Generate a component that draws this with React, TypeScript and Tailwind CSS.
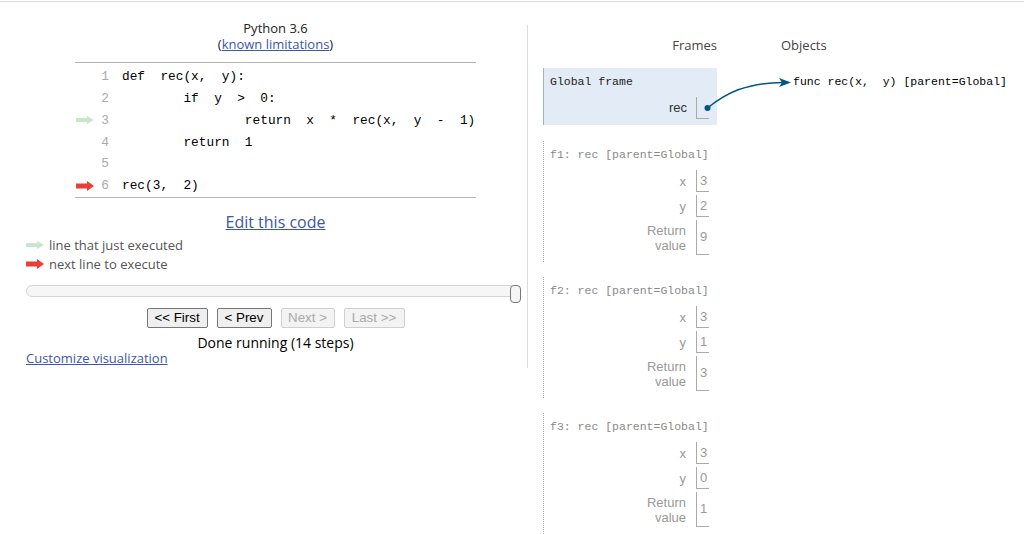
import React from "react";

const mono = "font-['Liberation_Mono',monospace]";
const sans = "font-['Open_Sans','Noto_Sans',sans-serif]";
const arial = "font-['Liberation_Sans',Arial,sans-serif]";

function Arrow({ color, big }: { color: string; big?: boolean }) {
  if (big) {
    return (
      <svg width="18" height="10" viewBox="0 0 18 10" className="block">
        <path d="M0 2.5H11V0L18 5L11 10V7.5H0Z" fill={color} />
      </svg>
    );
  }
  return (
    <svg width="18" height="8" viewBox="0 0 18 8" className="block">
      <path d="M0 2H11V0L18 4L11 8V6H0Z" fill={color} />
    </svg>
  );
}

const code = [
  "def  rec(x,  y):",
  "        if  y  >  0:",
  "                return  x  *  rec(x,  y  -  1)",
  "        return  1",
  "",
  "rec(3,  2)",
];

type Var = { name: string; value: string; ret?: boolean };

const frames: { title: string; vars: Var[] }[] = [
  {
    title: "f1: rec [parent=Global]",
    vars: [
      { name: "x", value: "3" },
      { name: "y", value: "2" },
      { name: "Return value", value: "9", ret: true },
    ],
  },
  {
    title: "f2: rec [parent=Global]",
    vars: [
      { name: "x", value: "3" },
      { name: "y", value: "1" },
      { name: "Return value", value: "3", ret: true },
    ],
  },
  {
    title: "f3: rec [parent=Global]",
    vars: [
      { name: "x", value: "3" },
      { name: "y", value: "0" },
      { name: "Return value", value: "1", ret: true },
    ],
  },
];

function VarRow({ v }: { v: Var }) {
  return (
    <div className={`flex items-center ${arial}`}>
      <div className="pr-[10px] text-right text-[13px] leading-[15px] text-[#999]">
        {v.ret ? (
          <>
            <div className="h-[15px]">Return</div>
            <div className="h-[15px]">value</div>
          </>
        ) : (
          v.name
        )}
      </div>
      <div
        className={`flex w-[13px] items-center border-b border-l border-[#aaa] pl-[3px] text-[13px] text-[#999] ${
          v.ret ? "h-[35px]" : "h-[22px]"
        }`}
      >
        {v.value}
      </div>
    </div>
  );
}

export default function App() {
  return (
    <div className={`relative h-[534px] w-[1024px] overflow-hidden bg-white ${sans}`}>
      <div className="mt-px border-t border-[#dcdcdc]" />

      <div className="flex pt-[23px]">
        {/* left: code + controls */}
        <div className="h-[343px] w-[528px] shrink-0 border-r border-[#dcdcdc] pl-[26px] pr-[2px]">
          <div className="-mt-[5px] text-center text-[13px] leading-[16px] text-[#222]">
            Python 3.6
          </div>
          <div className="text-center text-[13px] leading-[16px] text-[#222]">
            (<a href="#" className="text-[#3d58a2] underline">known limitations</a>)
          </div>

          <div className={`mx-auto mt-[10px] w-[401px] border-y border-[#b3b3b3] pt-[3px] ${mono} text-[12.8px]`}>
            {code.map((line, i) => (
              <div key={i} className="flex h-[21.8px] items-center">
                <div className="w-[22px] pl-px">
                  {i === 2 && <Arrow color="#c9e6ca" />}
                  {i === 5 && <Arrow color="#e93f34" big />}
                </div>
                <div className="w-[12px] text-right text-[#aaa]">{i + 1}</div>
                <div className="whitespace-pre pl-[13px] text-black">{line}</div>
              </div>
            ))}
          </div>

          <div className="mt-[14px] text-center text-[16px] leading-[20px]">
            <a href="#" className="text-[#3d58a2] underline">Edit this code</a>
          </div>

          <div className="mt-[4px] flex h-[19px] items-center gap-[5px] text-[13px] text-[#555]">
            <Arrow color="#c9e6ca" />
            <span>line that just executed</span>
          </div>
          <div className="flex h-[19px] items-center gap-[5px] text-[13px] text-[#555]">
            <Arrow color="#e93f34" big />
            <span>next line to execute</span>
          </div>

          <div className="relative mt-[11px] h-[18px] w-[495px]">
            <div className="mt-[2px] h-[12px] w-[490px] rounded-[6px] border border-[#d3d3d3] bg-[#f6f6f6]" />
            <div className="absolute right-0 top-0 h-[18px] w-[11px] rounded-[4px] border border-[#777] bg-[#f6f6f6]" />
          </div>

          <div className={`mt-[5px] flex justify-center gap-[9px] ${arial} text-[13.33px]`}>
            <button className="h-[20px] w-[61px] rounded-[2px] border border-[#767676] bg-[#efefef] leading-[18px] text-black">
              &lt;&lt; First
            </button>
            <button className="h-[20px] w-[55px] rounded-[2px] border border-[#767676] bg-[#efefef] leading-[18px] text-black">
              &lt; Prev
            </button>
            <button className="h-[20px] w-[54px] rounded-[2px] border border-[#cfcfcf] bg-[#f3f3f3] leading-[18px] text-[#a9a9a9]">
              Next &gt;
            </button>
            <button className="h-[20px] w-[61px] rounded-[2px] border border-[#cfcfcf] bg-[#f3f3f3] leading-[18px] text-[#a9a9a9]">
              Last &gt;&gt;
            </button>
          </div>

          <div className="mt-[7px] text-center text-[14px] leading-[16px] text-black">
            Done running (14 steps)
          </div>
          <div className="text-[13px] leading-[15px]">
            <a href="#" className="text-[#3d58a2] underline">Customize visualization</a>
          </div>
        </div>

        {/* right: frames + objects */}
        <div className="flex flex-1 gap-[64px] pl-[15px] pt-[12px]">
          <div className="w-[174px] shrink-0">
            <div className="mb-[15px] text-right text-[13px] leading-[16px] text-[#444]">Frames</div>

            <div className="mb-[16px] border-l border-[#a6b3b6] bg-[#e2ebf6] pb-[6px] pl-[6px] pr-[8px] pt-[6px]">
              <div className={`${mono} text-[11.5px] leading-[16px] text-[#222]`}>Global frame</div>
              <div className="mt-[7px] flex justify-end">
                <div className={`flex items-center ${arial}`}>
                  <div className="pr-[9px] text-[13px] text-[#333]">rec</div>
                  <div className="h-[22px] w-[13px] border-b border-l border-[#aaa]" />
                </div>
              </div>
            </div>

            {frames.map((f) => (
              <div
                key={f.title}
                className="mb-[15px] border-l border-dotted border-[#aaa] pb-[7px] pl-[6px] pr-[8px] pt-[6px]"
              >
                <div className={`${mono} whitespace-nowrap text-[11.5px] leading-[16px] text-[#8a8a8a]`}>
                  {f.title}
                </div>
                <div className="mt-[7px] flex flex-col items-end gap-[3px]">
                  {f.vars.map((v) => (
                    <VarRow key={v.name} v={v} />
                  ))}
                </div>
              </div>
            ))}
          </div>

          <div>
            <div className="mb-[15px] text-[13px] leading-[16px] text-[#444]">Objects</div>
            <div className={`pl-[12px] pt-[6px] ${mono} whitespace-pre text-[11.5px] leading-[16px] text-black`}>
              func rec(x,  y) [parent=Global]
            </div>
          </div>
        </div>
      </div>

      {/* pointer from global rec to function object */}
      <svg className="pointer-events-none absolute left-0 top-0" width="1024" height="534">
        <path d="M707.5 108 C726 93, 746 83, 782 82.5" fill="none" stroke="#005583" strokeWidth="1.5" />
        <path d="M791 82.5 L779 78 L782 82.5 L779 87 Z" fill="#005583" />
        <circle cx="707.5" cy="108" r="3" fill="#005583" />
      </svg>
    </div>
  );
}
